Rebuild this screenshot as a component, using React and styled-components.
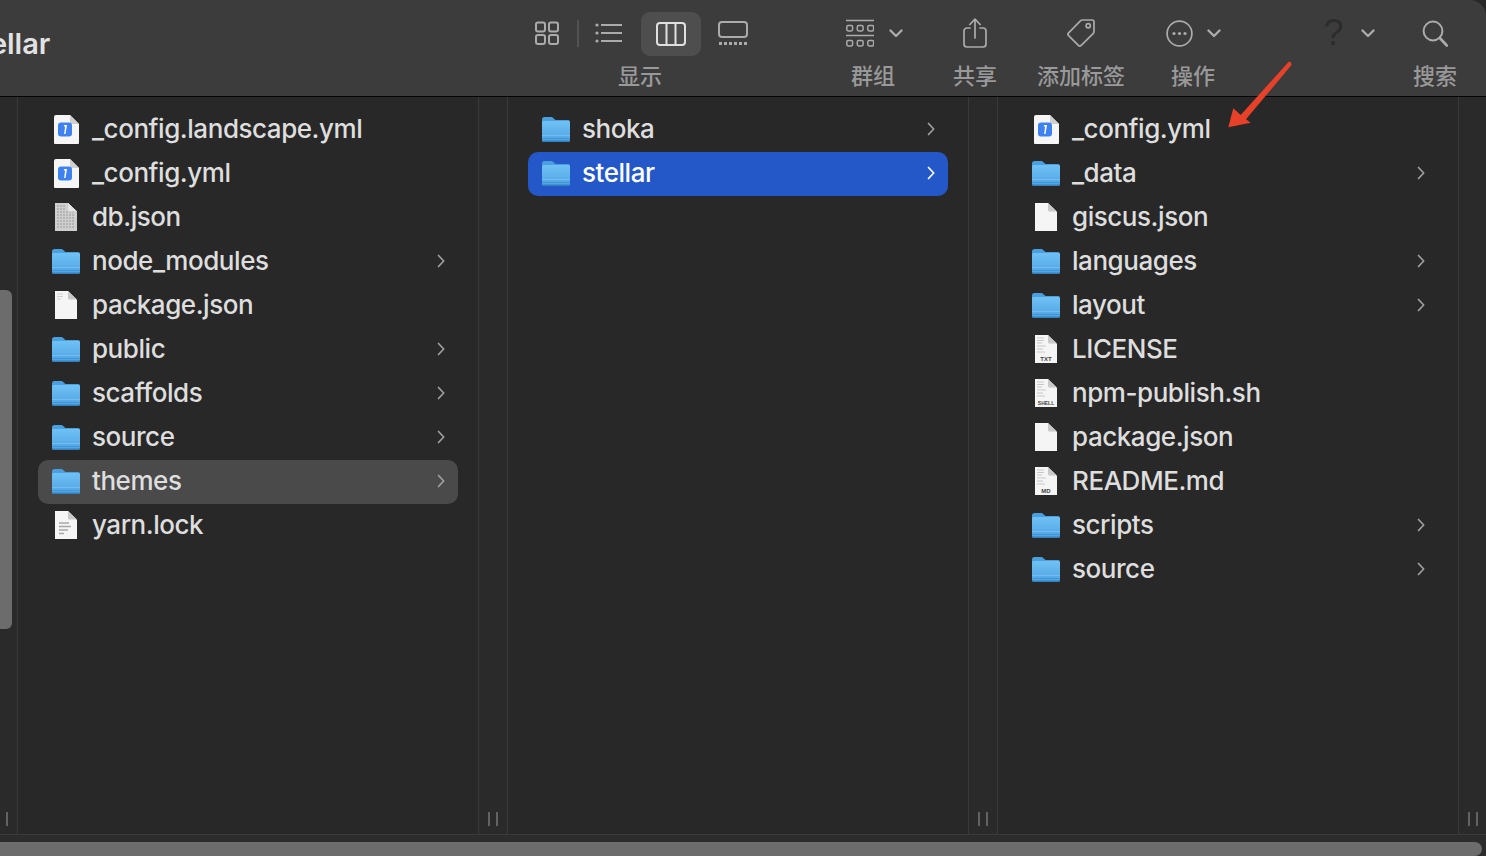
import React from "react";
import styled, { createGlobalStyle } from "styled-components";

const GlobalStyle = createGlobalStyle`
  html, body {
    margin: 0;
    padding: 0;
    height: 100%;
    background: #282828;
    overflow: hidden;
  }
`;

const Window = styled.div`
  position: relative;
  width: 1486px;
  height: 856px;
  display: flex;
  flex-direction: column;
  overflow: hidden;
  background: #282828;
  font-family: Inter, "Noto Sans CJK SC", sans-serif;
`;

const Toolbar = styled.header`
  flex: 0 0 96px;
  display: flex;
  background: #3c3c3c;
  border-top-right-radius: 16px;
`;

const Title = styled.div`
  flex: 0 0 530px;
  overflow: hidden;
  font-size: 29px;
  font-weight: 600;
  color: #e2e2e2;
  line-height: 88px;
  white-space: nowrap;
  & > span {
    margin-left: -36px;
  }
`;

const ToolItem = styled.div`
  flex: 0 0 ${({ $w }) => $w}px;
  margin-left: ${({ $ml }) => $ml || 0}px;
  display: flex;
  flex-direction: column;
  align-items: center;
`;

const ToolIcons = styled.div`
  height: 66px;
  display: flex;
  align-items: center;
  justify-content: center;
  margin-left: ${({ $shift }) => $shift || 0}px;
  color: #ababab;
`;

const ToolLabel = styled.div`
  font-family: "Noto Sans CJK SC", sans-serif;
  font-size: 22px;
  font-weight: 500;
  line-height: 16px;
  color: #999;
  white-space: nowrap;
`;

const Sep = styled.div`
  width: 2px;
  height: 27px;
  margin-left: 13px;
  background: #525252;
`;

const ViewButton = styled.div`
  flex: 0 0 ${({ $w }) => $w}px;
  height: 44px;
  margin-left: ${({ $ml }) => $ml || 0}px;
  margin-top: ${({ $active }) => ($active ? "2px" : "0")};
  display: flex;
  align-items: center;
  justify-content: center;
  border-radius: 9px;
  background: ${({ $active }) => ($active ? "#4e4e4e" : "transparent")};
  color: ${({ $active }) => ($active ? "#e0e0e0" : "#ababab")};
`;

const HelpMark = styled.span`
  font-family: "Liberation Sans", sans-serif;
  font-size: 36px;
  font-weight: 400;
  line-height: 44px;
  color: #2c2c2c;
`;

const Browser = styled.main`
  flex: 1;
  display: flex;
  min-height: 0;
  border-top: 1px solid #050505;
`;

const Strip = styled.div`
  position: relative;
  flex: 0 0 ${({ $w }) => $w}px;
  background: #2a2a2a;
  border-right: ${({ $end }) => ($end ? "0" : "1px solid #3a3a3a")};
  display: flex;
  align-items: flex-end;
  justify-content: center;
  gap: 6px;
  padding: 0 ${({ $pr }) => $pr || 0}px 8px 0;
  box-sizing: border-box;
`;

const Grip = styled.i`
  width: 2px;
  height: 14px;
  background: #626262;
`;

const StripThumb = styled.div`
  position: absolute;
  left: 0;
  top: 193px;
  width: 12px;
  height: 339px;
  background: #6c6c6c;
  border-radius: 0 6px 6px 0;
`;

const Column = styled.section`
  flex: 0 0 461px;
  border-right: 1px solid #3a3a3a;
  padding: 11px 20px 0;
  box-sizing: border-box;
  background: #282828;
`;

const Row = styled.div`
  height: 44px;
  display: flex;
  align-items: center;
  padding: 0 10px 2px 13px;
  box-sizing: border-box;
  border-radius: 10px;
  background: ${({ $state }) =>
    $state === "selected" ? "#2458c8" : $state === "dim" ? "#4a4a4a" : "transparent"};
  color: ${({ $state }) => ($state === "selected" ? "#fff" : "#dedede")};
`;

const IconSlot = styled.div`
  flex: 0 0 30px;
  height: 32px;
  margin-right: 11px;
  display: flex;
  align-items: center;
  justify-content: center;
`;

const Name = styled.span`
  flex: 1;
  font-size: 26px;
  font-weight: 450;
  line-height: 42px;
  letter-spacing: -0.45px;
  white-space: nowrap;
`;

const Chevron = styled.svg`
  flex: 0 0 8px;
  margin-right: 3px;
  color: ${({ $on }) => ($on ? "#fff" : "#a0a0a0")};
`;

const BottomBar = styled.footer`
  flex: 0 0 22px;
  background: #2c2c2c;
  border-top: 1px solid #3a3a3a;
  padding-top: 7px;
  box-sizing: border-box;
  display: flex;
`;

const HThumb = styled.div`
  flex: 1;
  margin-right: 4px;
  background: #6c6c6c;
  border-radius: 0 7px 7px 0;
`;

const ArrowOverlay = styled.svg`
  position: absolute;
  left: 1220px;
  top: 55px;
`;

const strokeProps = { fill: "none", stroke: "currentColor", strokeWidth: 2 };

const GridIcon = () => (
  <svg width="24" height="24" viewBox="0 0 24 24" {...strokeProps}>
    <rect x="1" y="1.5" width="9" height="9" rx="2" />
    <rect x="14" y="1.5" width="9" height="9" rx="2" />
    <rect x="1" y="14" width="9" height="9" rx="2" />
    <rect x="14" y="14" width="9" height="9" rx="2" />
  </svg>
);

const ListIcon = () => (
  <svg width="28" height="22" viewBox="0 0 28 22" {...strokeProps}>
    <path d="M6 3h21M6 11h21M6 19h21" />
    <circle cx="2" cy="3" r="1.6" fill="currentColor" stroke="none" />
    <circle cx="2" cy="11" r="1.6" fill="currentColor" stroke="none" />
    <circle cx="2" cy="19" r="1.6" fill="currentColor" stroke="none" />
  </svg>
);

const ColumnsIcon = () => (
  <svg width="30" height="24" viewBox="0 0 30 24" {...strokeProps}>
    <rect x="1" y="1" width="28" height="22" rx="3" />
    <path d="M10.5 1v22M19.5 1v22" />
  </svg>
);

const GalleryIcon = () => (
  <svg width="30" height="25" viewBox="0 0 30 25" {...strokeProps}>
    <rect x="1" y="1" width="28" height="15" rx="3" />
    <path d="M1 22.5h3M6 22.5h3M11 22.5h3M16 22.5h3M21 22.5h3M26 22.5h3" strokeWidth="3" />
  </svg>
);

const GroupIcon = () => (
  <svg width="28" height="28" viewBox="0 0 28 28" fill="none" stroke="currentColor" strokeWidth="1.5">
    <path d="M0 1.5h28M0 16.5h28" strokeWidth="1.7" />
    {[0, 10.5, 21].map((x) => (
      <React.Fragment key={x}>
        <rect x={x + 0.8} y="6.5" width="5.8" height="5.5" rx="1.4" />
        <rect x={x + 0.8} y="21.5" width="5.8" height="5.5" rx="1.4" />
      </React.Fragment>
    ))}
  </svg>
);

const ToolChevron = ({ ml = 14 }) => (
  <svg width="14" height="9" viewBox="0 0 14 9" style={{ marginLeft: ml }} fill="none" stroke="currentColor" strokeWidth="2.4" strokeLinecap="round" strokeLinejoin="round">
    <path d="M1.5 1.5 7 7l5.5-5.5" />
  </svg>
);

const ShareIcon = () => (
  <svg width="24" height="30" viewBox="0 0 24 30" {...strokeProps} strokeWidth="1.7" strokeLinecap="round" strokeLinejoin="round">
    <path d="M7 10H4a3 3 0 0 0-3 3v13a3 3 0 0 0 3 3h16a3 3 0 0 0 3-3V13a3 3 0 0 0-3-3h-3" />
    <path d="M12 20V1.5M6.8 6.5 12 1.2l5.2 5.3" />
  </svg>
);

const TagIcon = () => (
  <svg width="30" height="30" viewBox="0 0 30 30" {...strokeProps} strokeWidth="1.7" strokeLinejoin="round">
    <path d="M16.5 2H26a2 2 0 0 1 2 2v9.5a3 3 0 0 1-.9 2.1L15.2 27.4a2 2 0 0 1-2.8 0L2.6 17.6a2 2 0 0 1 0-2.8L14.4 2.9A3 3 0 0 1 16.5 2z" />
    <circle cx="22.2" cy="7.8" r="2.1" />
  </svg>
);

const ActionIcon = () => (
  <svg width="27" height="27" viewBox="0 0 27 27" {...strokeProps} strokeWidth="1.7">
    <circle cx="13.5" cy="13.5" r="12.4" />
    <circle cx="8" cy="13.5" r="1.6" fill="currentColor" stroke="none" />
    <circle cx="13.5" cy="13.5" r="1.6" fill="currentColor" stroke="none" />
    <circle cx="19" cy="13.5" r="1.6" fill="currentColor" stroke="none" />
  </svg>
);

const SearchIcon = () => (
  <svg width="26" height="27" viewBox="0 0 26 27" {...strokeProps} strokeLinecap="round">
    <circle cx="11" cy="11" r="9.4" />
    <path d="m17.8 18 7 7.5" strokeWidth="2.6" />
  </svg>
);

const RowChevron = ({ on }) => (
  <Chevron $on={on} width="8" height="14" viewBox="0 0 8 14" fill="none" stroke="currentColor" strokeWidth="1.7" strokeLinecap="round" strokeLinejoin="round">
    <path d="m1.5 1.5 5.2 5.5-5.2 5.5" />
  </Chevron>
);

const FolderIcon = ({ id }) => (
  <svg width="30" height="28" viewBox="0 0 30 28">
    <defs>
      <linearGradient id={id} x1="0" y1="0" x2="0" y2="1">
        <stop offset="0" stopColor="#70c1f4" />
        <stop offset="1" stopColor="#4ea3e3" />
      </linearGradient>
    </defs>
    <path d="M1 4.5A2.5 2.5 0 0 1 3.5 2h6.4c1 0 1.6.3 2.3 1l1.3 1.3c.4.4.8.6 1.5.6h12.5A2 2 0 0 1 29 7v5H1z" fill="#4a9fdf" />
    <path d="M1 7.5A1.5 1.5 0 0 1 2.5 6h25A1.500 1.500 0 0 1 29 7.500V25a2 2 0 0 1-2 2H3a2 2 0 0 1-2-2z" fill={`url(#${id})`} />
    <rect x="1" y="20" width="28" height="1" fill="#72bdee" />
    <rect x="1" y="23" width="28" height="1" fill="#4296d6" />
    <path d="M1 25.500h28V25a2 2 0 0 1-2 2H3a2 2 0 0 1-2-2z" fill="#3380bd" />
  </svg>
);

const DocShell = ({ w = 22, children }) => (
  <svg width={w + 2} height="30" viewBox={`0 0 ${w + 2} 30`}>
    <path d={`M1 1h${w - 9}l9 9v19H1z`} fill="#f5f5f5" />
    <path d={`M${w - 8} 1v7a1.500 1.500 0 0 0 1.500 1.500h7.500z`} fill="#c9c9c9" />
    {children}
  </svg>
);

const ConfigIcon = () => (
  <svg width="25" height="29" viewBox="0 0 25 29">
    <path d="M2 0h14l9 9v19a1 1 0 0 1-1 1H1a1 1 0 0 1-1-1V2a2 2 0 0 1 2-2z" fill="#f6f6f6" />
    <path d="M16 0v7.500A1.500 1.500 0 0 0 17.500 9H25z" fill="#cfcfcf" />
    <rect x="4" y="7.500" width="14" height="14" rx="3" fill="#3d82f0" />
    <path d="M10.300 10h2.700l-1.500 9h-1.400l1-7.600h-1.400z" fill="#fff" />
  </svg>
);

const DbIcon = () => (
  <DocShell>
    <path d="M1 1h13l9 9v19H1z" fill="#cfcfcf" />
    {[4, 7, 10, 13, 16, 19, 22, 25].map((y) => (
      <path key={y} d={`M3 ${y}h${y < 10 ? 9 : 18}`} stroke="#9c9c9c" strokeWidth="1.2" strokeDasharray="2 1" />
    ))}
    <path d="M14 1v7a1.500 1.500 0 0 0 1.500 1.500h7.500z" fill="#e4e4e4" />
  </DocShell>
);

const PlainIcon = ({ marks = true }) => (
  <DocShell>
    {marks && <path d="M3 4h6M3 6.500h6M3 9h4" stroke="#d2d2d2" strokeWidth="1.2" />}
  </DocShell>
);

const LinesIcon = () => (
  <DocShell>
    <path d="M5 13h10M5 16.500h12M5 20h9M5 23.500h5" stroke="#a8a8a8" strokeWidth="1.500" />
  </DocShell>
);

const LabelIcon = ({ label, size = 6 }) => (
  <DocShell>
    <path d="M3 4h7M3 6.500h7M3 9h5M3 12h9M3 15h6M3 18h8" stroke="#c8c8c8" strokeWidth="1" />
    <text
      x="12"
      y="26.800"
      textAnchor="middle"
      fontFamily="'Liberation Sans', sans-serif"
      fontWeight="700"
      fontSize={size}
      fill="#444"
    >
      {label}
    </text>
  </DocShell>
);

const icons = {
  config: () => <ConfigIcon />,
  db: () => <DbIcon />,
  package: () => <PlainIcon />,
  blank: () => <PlainIcon marks={false} />,
  lock: () => <LinesIcon />,
  txt: () => <LabelIcon label="TXT" />,
  shell: () => <LabelIcon label="SHELL" size={5} />,
  md: () => <LabelIcon label="MD" />,
};

const columnOne = [
  { name: "_config.landscape.yml", icon: "config" },
  { name: "_config.yml", icon: "config" },
  { name: "db.json", icon: "db" },
  { name: "node_modules", folder: true },
  { name: "package.json", icon: "package" },
  { name: "public", folder: true },
  { name: "scaffolds", folder: true },
  { name: "source", folder: true },
  { name: "themes", folder: true, state: "dim" },
  { name: "yarn.lock", icon: "lock" },
];

const columnTwo = [
  { name: "shoka", folder: true },
  { name: "stellar", folder: true, state: "selected" },
];

const columnThree = [
  { name: "_config.yml", icon: "config" },
  { name: "_data", folder: true },
  { name: "giscus.json", icon: "blank" },
  { name: "languages", folder: true },
  { name: "layout", folder: true },
  { name: "LICENSE", icon: "txt" },
  { name: "npm-publish.sh", icon: "shell" },
  { name: "package.json", icon: "blank" },
  { name: "README.md", icon: "md" },
  { name: "scripts", folder: true },
  { name: "source", folder: true },
];

function FileColumn({ id, items }) {
  return (
    <Column>
      {items.map((item, i) => (
        <Row key={item.name} $state={item.state}>
          <IconSlot>
            {item.folder ? <FolderIcon id={`${id}-${i}`} /> : icons[item.icon]()}
          </IconSlot>
          <Name>{item.name}</Name>
          {item.folder && <RowChevron on={item.state === "selected"} />}
        </Row>
      ))}
    </Column>
  );
}

export default function App() {
  return (
    <Window>
      <GlobalStyle />
      <Toolbar>
        <Title>
          <span>stellar</span>
        </Title>
        <ToolItem $w={220}>
          <ToolIcons>
            <ViewButton $w={34}><GridIcon /></ViewButton>
            <Sep />
            <ViewButton $w={60}><ListIcon /></ViewButton>
            <ViewButton $w={60} $ml={2} $active><ColumnsIcon /></ViewButton>
            <ViewButton $w={34} $ml={15}><GalleryIcon /></ViewButton>
          </ToolIcons>
          <ToolLabel>显示</ToolLabel>
        </ToolItem>
        <ToolItem $w={64} $ml={91}>
          <ToolIcons $shift={3}>
            <GroupIcon />
            <ToolChevron ml={15} />
          </ToolIcons>
          <ToolLabel>群组</ToolLabel>
        </ToolItem>
        <ToolItem $w={44} $ml={48}>
          <ToolIcons><ShareIcon /></ToolIcons>
          <ToolLabel>共享</ToolLabel>
        </ToolItem>
        <ToolItem $w={88} $ml={40}>
          <ToolIcons><TagIcon /></ToolIcons>
          <ToolLabel>添加标签</ToolLabel>
        </ToolItem>
        <ToolItem $w={56} $ml={40}>
          <ToolIcons>
            <ActionIcon />
            <ToolChevron />
          </ToolIcons>
          <ToolLabel>操作</ToolLabel>
        </ToolItem>
        <ToolItem $w={60} $ml={98}>
          <ToolIcons>
            <HelpMark>?</HelpMark>
            <ToolChevron ml={17} />
          </ToolIcons>
        </ToolItem>
        <ToolItem $w={44} $ml={34}>
          <ToolIcons><SearchIcon /></ToolIcons>
          <ToolLabel>搜索</ToolLabel>
        </ToolItem>
      </Toolbar>
      <Browser>
        <Strip $w={18} $pr={3}>
          <StripThumb />
          <Grip />
        </Strip>
        <FileColumn id="a" items={columnOne} />
        <Strip $w={29}>
          <Grip />
          <Grip />
        </Strip>
        <FileColumn id="b" items={columnTwo} />
        <Strip $w={29}>
          <Grip />
          <Grip />
        </Strip>
        <FileColumn id="c" items={columnThree} />
        <Strip $w={27} $end>
          <Grip />
          <Grip />
        </Strip>
      </Browser>
      <BottomBar>
        <HThumb />
      </BottomBar>
      <ArrowOverlay width="80" height="80" viewBox="1220 55 80 80">
        <path
          d="M1288.500 62 Q1291 61 1291.500 65 L1246 119.300 1250.700 122.700 1228.300 127.300 1233.300 108.300 1240.700 115z"
          fill="#e8412a"
        />
      </ArrowOverlay>
    </Window>
  );
}
